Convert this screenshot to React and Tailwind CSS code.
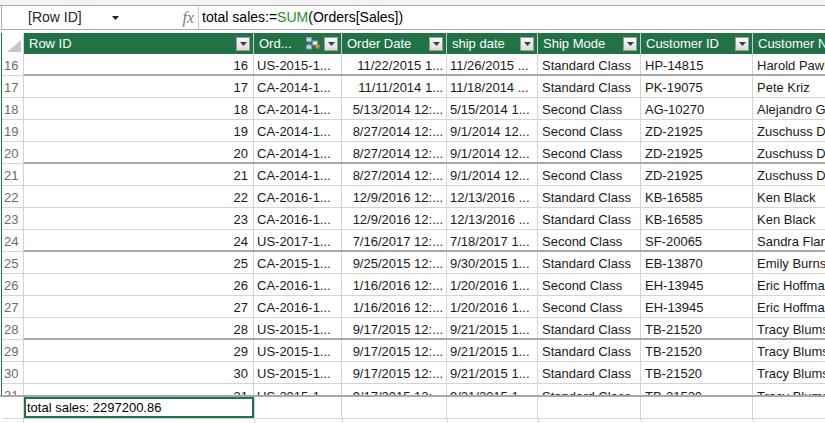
import React from 'react'

const cols = [
  { key: 'id', label: 'Row ID', w: 'w-[230px] shrink-0' },
  { key: 'ord', label: 'Ord...', w: 'w-[88px] shrink-0', icon: true },
  { key: 'od', label: 'Order Date', w: 'w-[105px] shrink-0' },
  { key: 'sd', label: 'ship date', w: 'w-[91px] shrink-0' },
  { key: 'sm', label: 'Ship Mode', w: 'w-[103px] shrink-0' },
  { key: 'cid', label: 'Customer ID', w: 'w-[112px] shrink-0' },
  { key: 'cn', label: 'Customer Name', w: 'flex-1 min-w-0' },
]

const rows = [
  [16, 'US-2015-1...', '11/22/2015 1...', '11/26/2015 ...', 'Standard Class', 'HP-14815', 'Harold Pawlan'],
  [17, 'CA-2014-1...', '11/11/2014 1...', '11/18/2014 ...', 'Standard Class', 'PK-19075', 'Pete Kriz'],
  [18, 'CA-2014-1...', '5/13/2014 12:...', '5/15/2014 1...', 'Second Class', 'AG-10270', 'Alejandro Grove'],
  [19, 'CA-2014-1...', '8/27/2014 12:...', '9/1/2014 12...', 'Second Class', 'ZD-21925', 'Zuschuss Donatelli'],
  [20, 'CA-2014-1...', '8/27/2014 12:...', '9/1/2014 12...', 'Second Class', 'ZD-21925', 'Zuschuss Donatelli'],
  [21, 'CA-2014-1...', '8/27/2014 12:...', '9/1/2014 12...', 'Second Class', 'ZD-21925', 'Zuschuss Donatelli'],
  [22, 'CA-2016-1...', '12/9/2016 12:...', '12/13/2016 ...', 'Standard Class', 'KB-16585', 'Ken Black'],
  [23, 'CA-2016-1...', '12/9/2016 12:...', '12/13/2016 ...', 'Standard Class', 'KB-16585', 'Ken Black'],
  [24, 'US-2017-1...', '7/16/2017 12:...', '7/18/2017 1...', 'Second Class', 'SF-20065', 'Sandra Flanagan'],
  [25, 'CA-2015-1...', '9/25/2015 12:...', '9/30/2015 1...', 'Standard Class', 'EB-13870', 'Emily Burns'],
  [26, 'CA-2016-1...', '1/16/2016 12:...', '1/20/2016 1...', 'Second Class', 'EH-13945', 'Eric Hoffmann'],
  [27, 'CA-2016-1...', '1/16/2016 12:...', '1/20/2016 1...', 'Second Class', 'EH-13945', 'Eric Hoffmann'],
  [28, 'US-2015-1...', '9/17/2015 12:...', '9/21/2015 1...', 'Standard Class', 'TB-21520', 'Tracy Blumstein'],
  [29, 'US-2015-1...', '9/17/2015 12:...', '9/21/2015 1...', 'Standard Class', 'TB-21520', 'Tracy Blumstein'],
  [30, 'US-2015-1...', '9/17/2015 12:...', '9/21/2015 1...', 'Standard Class', 'TB-21520', 'Tracy Blumstein'],
]

const thick = [16, 20, 24, 28]

function FilterButton() {
  return (
    <span className="w-[14px] h-[14px] flex items-center justify-center border border-[#9a9a9a] bg-gradient-to-b from-[#fbfbfb] to-[#dcdcdc] shrink-0">
      <svg width="7" height="4" viewBox="0 0 7 4">
        <path d="M0 0h7L3.5 4z" fill="#3c3c3c" />
      </svg>
    </span>
  )
}

function RelIcon() {
  return (
    <svg width="14" height="13" viewBox="0 0 14 13" className="shrink-0">
      <rect x="0.5" y="0.5" width="5" height="4" fill="#c9d6e6" stroke="#7d93ad" />
      <rect x="0.5" y="8" width="5" height="4" fill="#c9d6e6" stroke="#7d93ad" />
      <rect x="6.5" y="4" width="5" height="4" fill="#e8eef6" stroke="#7d93ad" />
      <path d="M3 4.5v3.5M5.5 6h1" stroke="#7d93ad" />
      <circle cx="11.5" cy="9.5" r="2.3" fill="#e8872b" />
    </svg>
  )
}

function Cells({ r }) {
  return (
    <>
      <div className="w-[230px] shrink-0 h-full border-r border-[#d4d4d4] flex items-center justify-end pt-[3px] pr-[5px]">{r[0]}</div>
      <div className="w-[88px] shrink-0 h-full border-r border-[#d4d4d4] flex items-center pt-[3px] pl-[3px] overflow-hidden whitespace-nowrap">{r[1]}</div>
      <div className="w-[105px] shrink-0 h-full border-r border-[#d4d4d4] flex items-center justify-end pt-[3px] pr-[3px] overflow-hidden whitespace-nowrap">{r[2]}</div>
      <div className="w-[91px] shrink-0 h-full border-r border-[#d4d4d4] flex items-center pt-[3px] pl-[3px] overflow-hidden whitespace-nowrap">{r[3]}</div>
      <div className="w-[103px] shrink-0 h-full border-r border-[#d4d4d4] flex items-center pt-[3px] pl-[4px] overflow-hidden whitespace-nowrap">{r[4]}</div>
      <div className="w-[112px] shrink-0 h-full border-r border-[#d4d4d4] flex items-center pt-[3px] pl-[4px] overflow-hidden whitespace-nowrap">{r[5]}</div>
      <div className="flex-1 min-w-0 h-full flex items-center pt-[3px] pl-[4px] overflow-hidden whitespace-nowrap">{r[6]}</div>
    </>
  )
}

export default function App() {
  return (
    <div className="w-[825px] h-[423px] overflow-hidden bg-white text-[13px] text-[#1a1a1a] font-['Liberation_Sans',Arial,sans-serif]">
      {/* ribbon edge */}
      <div className="h-[6px] bg-[#f3f3f3] border-b border-[#ababab]" />

      {/* formula bar */}
      <div className="h-[24px] flex items-stretch border-b border-l border-[#ababab] ml-px">
        <div className="w-[196px] flex items-center pl-[26px]">
          <span className="w-[84px] text-[14px] text-[#262626]">[Row ID]</span>
          <svg width="7" height="4" viewBox="0 0 7 4">
            <path d="M0 0h7L3.5 4z" fill="#222" />
          </svg>
          <span className="ml-auto mr-[4px] font-['Liberation_Serif',serif] italic text-[16px] text-[#7a7a7a]">fx</span>
        </div>
        <div className="w-px bg-[#c8c8c8]" />
        <div className="flex items-center pl-[3px] text-[14px] text-black whitespace-nowrap">
          total sales:=<span className="text-[#1f8f1f]">SUM</span>(Orders[Sales])
        </div>
      </div>
      <div className="h-[3px]" />

      {/* grid */}
      <div className="ml-px border-l border-[#217346]">
        {/* header */}
        <div className="h-[21px] flex">
          <div className="w-[22px] shrink-0 h-full border-r border-[#d4d4d4] bg-white flex items-end justify-end pr-[2px] pb-[2px]">
            <svg width="14" height="12" viewBox="0 0 14 12">
              <path d="M14 0V12H0z" fill="#c6c6c6" />
            </svg>
          </div>
          <div className="flex-1 min-w-0 flex bg-[#217346] text-white">
            {cols.map((c, i) => (
              <div
                key={c.key}
                className={`${c.w} h-full flex items-center pl-[5px] pr-[3px] overflow-hidden whitespace-nowrap ${i < cols.length - 1 ? 'border-r border-[#b9d3c3]' : ''}`}
              >
                <span className={i < cols.length - 1 ? 'flex-1 min-w-0 overflow-hidden' : 'shrink-0'}>{c.label}</span>
                {c.icon && <span className="mr-[4px]"><RelIcon /></span>}
                {i < cols.length - 1 && <FilterButton />}
              </div>
            ))}
          </div>
        </div>

        {/* rows */}
        {rows.map((r) => (
          <div key={r[0]} className="h-[22px] flex">
            <div className="w-[22px] shrink-0 h-full border-r border-b border-[#d4d4d4] text-[#6b6b6b] flex items-center pt-[2px] pl-[2px]">{r[0]}</div>
            <div className={`flex-1 min-w-0 h-full flex ${thick.includes(r[0]) ? 'border-b-2 border-[#a8a8a8]' : 'border-b border-[#d4d4d4]'}`}>
              <Cells r={r} />
            </div>
          </div>
        ))}

        {/* partially visible row 31 */}
        <div className="h-[11px] overflow-hidden flex">
          <div className="w-[22px] h-[22px] shrink-0 border-r border-[#d4d4d4] text-[#6b6b6b] flex items-center pt-[2px] pl-[2px]">31</div>
          <div className="flex-1 min-w-0 h-[22px] flex">
            <Cells r={[31, 'US-2015-1...', '9/17/2015 12:...', '9/21/2015 1...', 'Standard Class', 'TB-21520', 'Tracy Blumstein']} />
          </div>
        </div>
      </div>

      {/* frozen split */}
      <div className="h-[2px] bg-[#a8a8a8]" />

      {/* measure grid */}
      <div className="pl-[2px]">
        <div className="h-[22px] flex">
          <div className="w-[22px] shrink-0 h-full border-r border-b border-[#d4d4d4]" />
          <div className="w-[230px] shrink-0 h-full border-b border-[#d4d4d4] bg-white">
            <div className="h-[21px] border-2 border-[#217346] flex items-center pl-[1px] pt-px whitespace-nowrap text-black">
              total sales: 2297200.86
            </div>
          </div>
          <div className="w-[88px] shrink-0 h-full border-r border-b border-l border-[#d4d4d4]" />
          <div className="w-[105px] shrink-0 h-full border-r border-b border-[#d4d4d4]" />
          <div className="w-[91px] shrink-0 h-full border-r border-b border-[#d4d4d4]" />
          <div className="w-[103px] shrink-0 h-full border-r border-b border-[#d4d4d4]" />
          <div className="w-[112px] shrink-0 h-full border-r border-b border-[#d4d4d4]" />
          <div className="flex-1 h-full border-b border-[#d4d4d4]" />
        </div>
        <div className="h-[22px] flex">
          <div className="w-[22px] shrink-0 h-full border-r border-[#d4d4d4]" />
          <div className="w-[231px] shrink-0 h-full border-r border-[#d4d4d4]" />
          <div className="w-[88px] shrink-0 h-full border-r border-[#d4d4d4]" />
          <div className="w-[105px] shrink-0 h-full border-r border-[#d4d4d4]" />
          <div className="w-[91px] shrink-0 h-full border-r border-[#d4d4d4]" />
          <div className="w-[103px] shrink-0 h-full border-r border-[#d4d4d4]" />
          <div className="w-[112px] shrink-0 h-full border-r border-[#d4d4d4]" />
        </div>
      </div>
    </div>
  )
}
